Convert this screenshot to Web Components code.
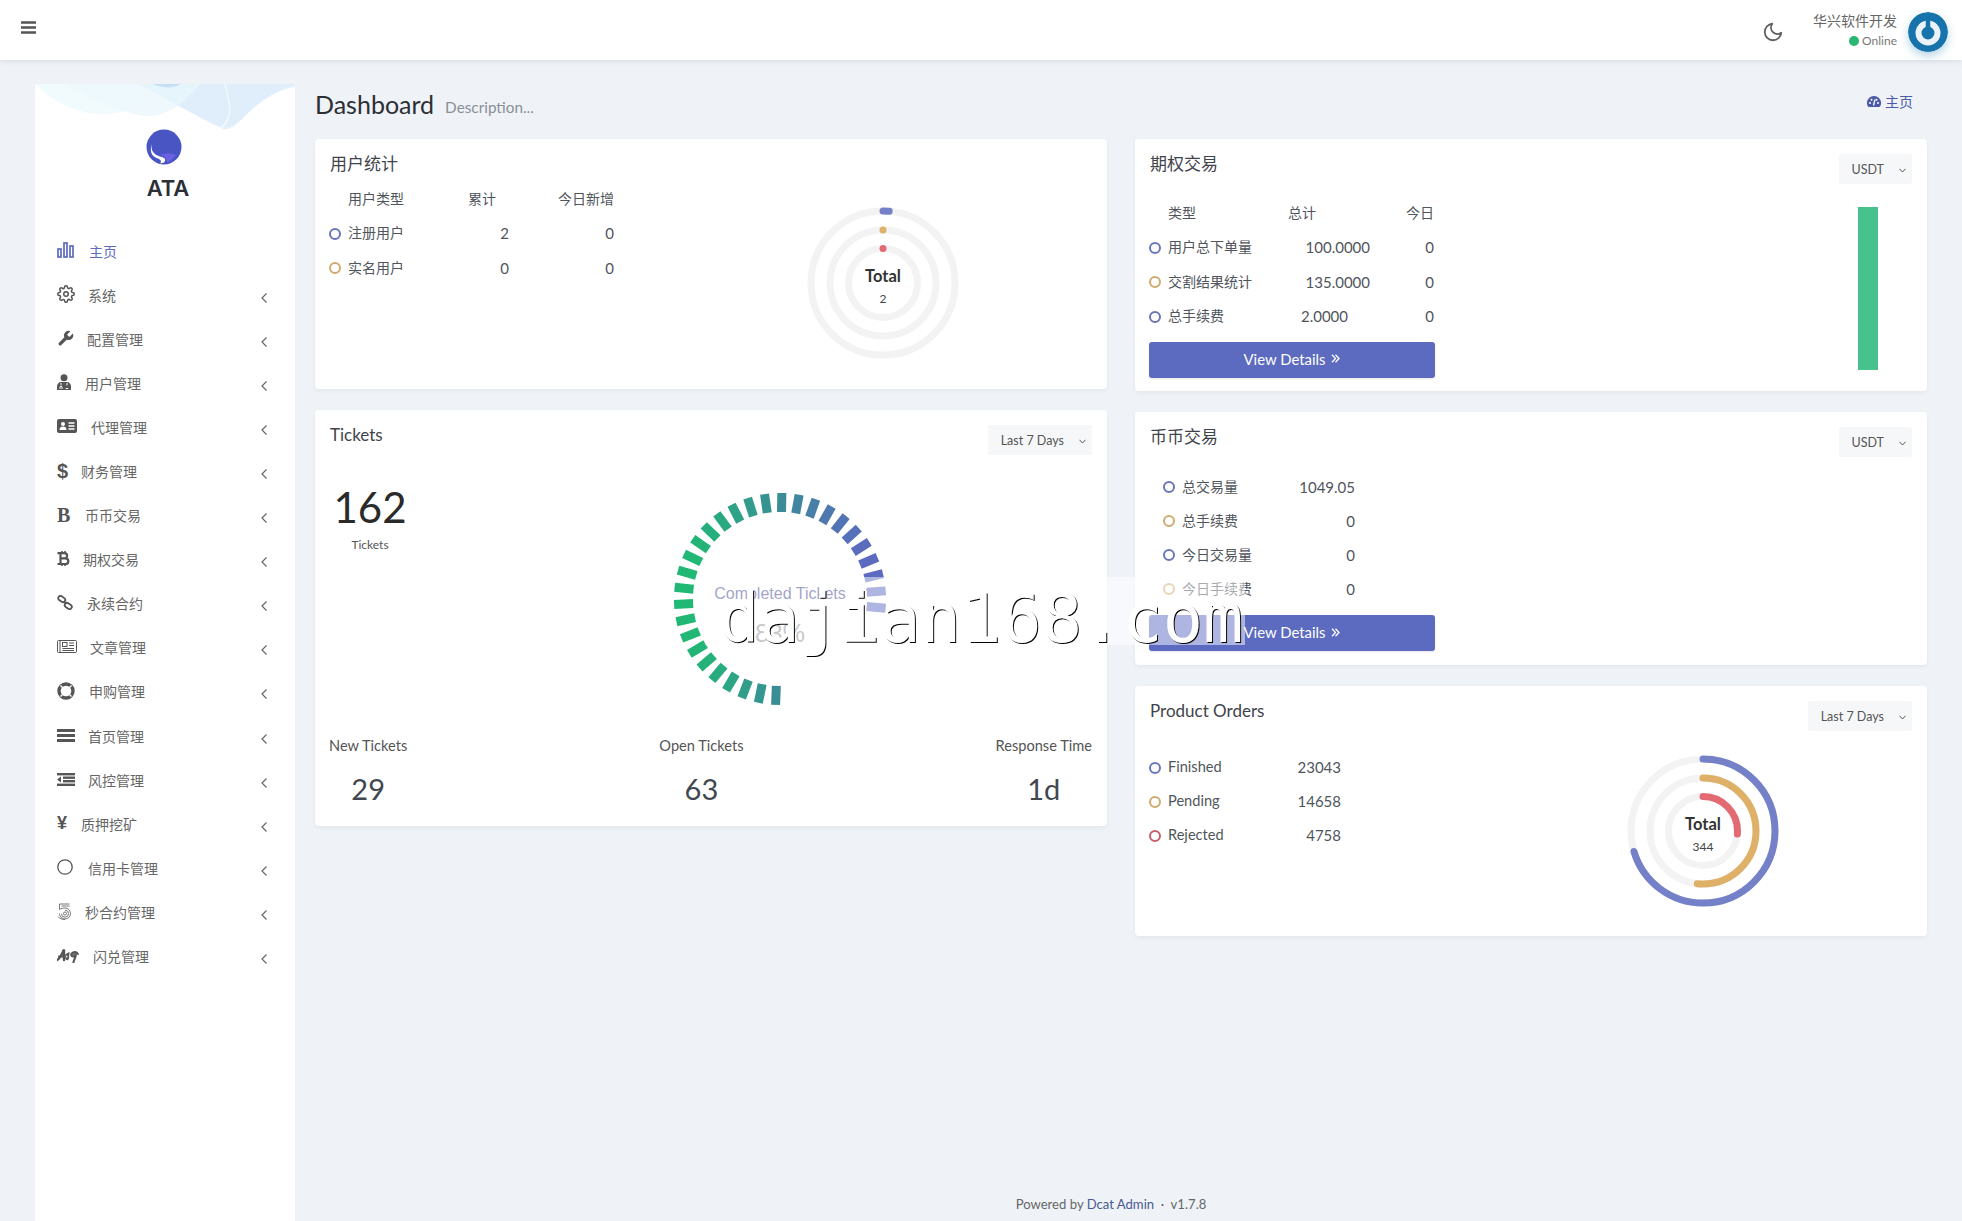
<!DOCTYPE html>
<html lang="zh"><head><meta charset="utf-8"><title>Dashboard</title>
<style>
html,body{margin:0;padding:0;height:1221px;overflow:hidden;background:#eff3f8;color:#414750;
font:14px/20px Lato,"Noto Sans CJK SC","Noto Sans",sans-serif;}
</style></head><body>
<app-shell>
  <app-navbar></app-navbar>
  <app-sidebar slot="side"></app-sidebar>
  <page-head slot="head"></page-head>
  <div slot="left">
    <dash-card style="--h:250px">
      <div style="display:grid;grid-template-columns:345px 1fr">
        <div style="--cols:180px 105px;--rh:34.5px">
          <card-title>用户统计</card-title>
          <div style="height:7.25px"></div>
          <data-row head a="用户类型" b="累计" c="今日新增" pad="13"></data-row>
          <data-row color="#6a76b8" a="注册用户" b="2" c="0"></data-row>
          <data-row color="#d0aa6e" a="实名用户" b="0" c="0"></data-row>
        </div>
        <div style="display:flex;justify-content:center;padding-top:49px">
          <ring-chart label="Total" value="2" v1="5" v2="0.01" v3="0.01"></ring-chart>
        </div>
      </div>
    </dash-card>
    <dash-card style="--h:416px">
      <card-head><card-title>Tickets</card-title><select-btn>Last 7 Days</select-btn></card-head>
      <div style="display:flex">
        <div style="width:82px;text-align:center;padding-top:27px">
          <div style="font-size:42px;line-height:50px;color:#2a2a2a">162</div>
          <div style="font-size:12px;line-height:18px;margin-top:4px;color:#555">Tickets</div>
        </div>
        <ticket-chart style="margin:34px 0 0 259px"></ticket-chart>
      </div>
      <div style="display:flex;justify-content:space-between;margin-top:28px">
        <stat-col label="New Tickets" value="29"></stat-col>
        <stat-col label="Open Tickets" value="63"></stat-col>
        <stat-col label="Response Time" value="1d"></stat-col>
      </div>
    </dash-card>
  </div>
  <div slot="right">
    <dash-card style="--h:252px">
      <card-head><card-title>期权交易</card-title><select-btn>USDT</select-btn></card-head>
      <div style="display:grid;grid-template-columns:286px 1fr;--cols:221px 64px;--rh:34.5px;padding-top:11.25px">
        <div>
          <data-row head a="类型" b="总计" c="今日" pad="54"></data-row>
          <data-row color="#6a76b8" a="用户总下单量" b="100.0000" c="0"></data-row>
          <data-row color="#d0aa6e" a="交割结果统计" b="135.0000" c="0"></data-row>
          <data-row color="#6a76b8" a="总手续费" b="2.0000" c="0" pad="22"></data-row>
          <view-btn style="margin-top:8.25px"></view-btn>
        </div>
        <div style="display:flex;justify-content:flex-end;padding:11.75px 34px 0 0">
          <div style="width:20px;height:163px;background:#47c28c"></div>
        </div>
      </div>
    </dash-card>
    <dash-card style="--h:253px">
      <card-head><card-title>币币交易</card-title><select-btn>USDT</select-btn></card-head>
      <div style="--cols:192px;--rh:34px;padding:12.5px 0 0 14px">
        <data-row color="#6a76b8" a="总交易量" b="1049.05"></data-row>
        <data-row color="#d0aa6e" a="总手续费" b="0"></data-row>
        <data-row color="#6a76b8" a="今日交易量" b="0"></data-row>
        <data-row color="#d0aa6e" a="今日手续费" b="0"></data-row>
      </div>
      <view-btn style="margin-top:9.5px;width:286px"></view-btn>
    </dash-card>
    <dash-card style="--h:250px">
      <card-head><card-title>Product Orders</card-title><select-btn>Last 7 Days</select-btn></card-head>
      <div style="display:flex;--cols:192px;--rh:34px;--lf:14.6px;padding-top:19px">
        <div style="width:192px">
          <data-row color="#6a76b8" a="Finished" b="23043"></data-row>
          <data-row color="#d0aa6e" a="Pending" b="14658"></data-row>
          <data-row color="#c4606c" a="Rejected" b="4758"></data-row>
        </div>
        <ring-chart style="margin:1px 0 0 282px" label="Total" value="344" v1="253" v2="186" v3="95"></ring-chart>
      </div>
    </dash-card>
  </div>
  <page-foot slot="foot"></page-foot>
  <water-mark slot="over">dajian168.com</water-mark>
</app-shell>
<script>
const def=(n,html)=>customElements.define(n,class extends HTMLElement{constructor(){super();this.attachShadow({mode:'open'}).innerHTML=html}});
const esc=s=>String(s==null?'':s);

def('app-shell',`<style>
:host{display:block;position:relative;width:1962px;height:1221px;overflow:hidden}
.main{display:flex;height:1161px}
.side{width:260px;margin:24px 0 0 35px;flex:none}
.content{flex:1;margin:0 35px 0 20px;display:flex;flex-direction:column;min-width:0}
.cols{display:grid;grid-template-columns:792px 792px;gap:28px}
::slotted([slot=left]),::slotted([slot=right]){display:flex;flex-direction:column;gap:21px}
</style>
<slot></slot>
<div class="main">
<div class="side"><slot name="side"></slot></div>
<div class="content">
<slot name="head"></slot>
<div class="cols"><slot name="left"></slot><slot name="right"></slot></div>
<div style="margin-top:auto"><slot name="foot"></slot></div>
</div></div>
<slot name="over"></slot>`);

def('app-navbar',`<style>
:host{display:flex;align-items:center;height:60px;background:#fff;box-shadow:0 1px 6px rgba(0,0,0,.1);position:relative;z-index:1}
.bars{margin:-6px 0 0 21px;display:block}
.sp{flex:1}
.moon{margin-right:29px;display:block;margin-top:3px}
.who{text-align:right;margin-right:11px;color:#666}
.n{font-size:14px;line-height:20px;margin-top:1px}
.o{font-size:12px;line-height:18px;display:flex;justify-content:flex-end;align-items:center;gap:3px;color:#777;margin-top:1px}
.o i{width:10px;height:10px;border-radius:50%;background:#2bb673;display:block}
.av{display:block;margin-right:14px;margin-top:4px;border-radius:50%;box-shadow:0 4px 8px rgba(22,115,171,.3)}
</style>
<svg class="bars" width="15" height="13" viewBox="0 0 15 13"><path d="M0 1.5h15M0 6.5h15M0 11.5h15" stroke="#555" stroke-width="2.4"/></svg>
<div class="sp"></div>
<svg class="moon" width="22" height="22" viewBox="0 0 24 24" fill="none" stroke="#606060" stroke-width="2" stroke-linecap="round" stroke-linejoin="round"><path d="M21 12.79A9 9 0 1 1 11.21 3 7 7 0 0 0 21 12.79z"/></svg>
<div class="who"><div class="n">华兴软件开发</div><div class="o"><i></i>Online</div></div>
<svg class="av" width="40" height="40" viewBox="0 0 40 40"><circle cx="20" cy="20" r="20" fill="#1673ab"/><circle cx="20" cy="21" r="9.5" fill="none" stroke="#e9f3f9" stroke-width="6"/><path d="M20 7v13" stroke="#1673ab" stroke-width="4.5" stroke-linecap="round"/></svg>`);

const ICONS={
 chart:`<svg width="17" height="16" viewBox="0 0 17 16" fill="none" stroke="#5c6bc0" stroke-width="1.7"><rect x="1" y="7" width="3" height="8"/><rect x="7" y="1" width="3" height="14"/><rect x="13" y="4" width="3" height="11"/></svg>`,
 gear:`<svg width="18" height="18" viewBox="0 0 24 24" fill="none" stroke="#555" stroke-width="2" stroke-linecap="round" stroke-linejoin="round"><circle cx="12" cy="12" r="3"/><path d="M19.4 15a1.65 1.65 0 0 0 .33 1.82l.06.06a2 2 0 0 1 0 2.83 2 2 0 0 1-2.83 0l-.06-.06a1.65 1.65 0 0 0-1.82-.33 1.65 1.65 0 0 0-1 1.51V21a2 2 0 0 1-2 2 2 2 0 0 1-2-2v-.09A1.65 1.65 0 0 0 9 19.4a1.65 1.65 0 0 0-1.82.33l-.06.06a2 2 0 0 1-2.83 0 2 2 0 0 1 0-2.83l.06-.06a1.65 1.65 0 0 0 .33-1.82 1.65 1.65 0 0 0-1.51-1H3a2 2 0 0 1-2-2 2 2 0 0 1 2-2h.09A1.65 1.65 0 0 0 4.6 9a1.65 1.65 0 0 0-.33-1.82l-.06-.06a2 2 0 0 1 0-2.83 2 2 0 0 1 2.83 0l.06.06a1.65 1.65 0 0 0 1.82.33H9a1.65 1.65 0 0 0 1-1.51V3a2 2 0 0 1 2-2 2 2 0 0 1 2 2v.09a1.65 1.65 0 0 0 1 1.51 1.65 1.65 0 0 0 1.82-.33l.06-.06a2 2 0 0 1 2.83 0 2 2 0 0 1 0 2.83l-.06.06a1.65 1.65 0 0 0-.33 1.82V9a1.65 1.65 0 0 0 1.51 1H21a2 2 0 0 1 2 2 2 2 0 0 1-2 2h-.09a1.65 1.65 0 0 0-1.51 1z"/></svg>`,
 wrench:`<svg width="17" height="17" viewBox="1 1 22 22" fill="#555"><path d="M14.7 6.3a1 1 0 0 0 0 1.4l1.6 1.6a1 1 0 0 0 1.4 0l3.77-3.77a6 6 0 0 1-7.94 7.94l-6.91 6.91a2.12 2.12 0 0 1-3-3l6.91-6.91a6 6 0 0 1 7.94-7.94l-3.76 3.76z"/></svg>`,
 user:`<svg width="14" height="16" viewBox="0 0 14 16"><circle cx="7" cy="3.7" r="3.5" fill="#555"/><path d="M0 16v-3.5C0 9.8 2 8 4 8h6c2 0 4 1.8 4 4.5V16z" fill="#555"/><path d="M4 9v2M10 9v2.5M3 15v-2l1-1.2 1 1.2v2M8.7 14.5h2.6" stroke="#fff" stroke-width="1" fill="none"/></svg>`,
 card:`<svg width="20" height="14" viewBox="0 0 20 14"><rect width="20" height="14" rx="2" fill="#555"/><circle cx="6" cy="5" r="2" fill="#fff"/><path d="M2.5 11c0-2.5 1.5-3.5 3.5-3.5S9.5 8.5 9.5 11z" fill="#fff"/><path d="M11.5 4h6M11.5 7h6M11.5 10h6" stroke="#fff" stroke-width="1.4"/></svg>`,
 dollar:`<span style="font:700 20px/18px 'Liberation Sans',sans-serif;color:#555;display:block">$</span>`,
 bold:`<span style="font:700 20px/18px 'Liberation Serif',serif;color:#555;display:block">B</span>`,
 btc:`<svg width="13" height="15" viewBox="0 0 13 15" fill="none" stroke="#555"><path d="M.5 2.2h7a2.6 2.6 0 0 1 0 5.2H3.5M3.5 7.4h5a2.8 2.8 0 0 1 0 5.600H.5M3.5 2v11" stroke-width="2.2"/><path d="M5 0v2.500M8 0v2.500M5 12.500v2.500M8 12.500v2.500" stroke-width="1.6"/></svg>`,
 link:`<svg width="16" height="15" viewBox="0 0 16 15" fill="none" stroke="#555" stroke-width="1.8"><rect x="1" y="1.800" width="7.5" height="4.500" rx="2.200" transform="rotate(35 4.700 4)"/><rect x="7.5" y="8.700" width="7.5" height="4.500" rx="2.200" transform="rotate(35 11.200 11)"/><path d="M6.5 6.500l3 2"/></svg>`,
 news:`<svg width="20" height="13" viewBox="0 0 20 13" fill="none" stroke="#555"><rect x=".5" y=".5" width="19" height="12" rx="1"/><path d="M3 .5v12"/><rect x="5.5" y="2.500" width="4.500" height="4" fill="#fff"/><path d="M12 3h5M12 5.500h5M5.500 8.500h11.500M5.500 10.500h11.500" stroke-width="1.2"/></svg>`,
 ring:`<svg width="18" height="18" viewBox="0 0 18 18"><circle cx="9" cy="9" r="7" fill="none" stroke="#555" stroke-width="3.4"/><path d="M3.500 3.500l3.500 3.500M14.500 3.500l-3.500 3.500M3.500 14.500l3.500-3.500M14.500 14.500l-3.500-3.500" stroke="#fff" stroke-width="1.4"/></svg>`,
 rows:`<svg width="18" height="13" viewBox="0 0 18 13" fill="#555"><rect width="18" height="3"/><rect y="5" width="18" height="3"/><rect y="10" width="18" height="3"/></svg>`,
 outdent:`<svg width="18" height="13" viewBox="0 0 18 13" fill="#555"><rect width="18" height="2.4"/><rect x="6" y="3.500" width="12" height="2.4"/><rect x="6" y="7" width="12" height="2.4"/><rect y="10.600" width="18" height="2.4"/><path d="M4 3.500v6L0 6.500z"/></svg>`,
 yen:`<span style="font:700 18px/18px 'Liberation Sans',sans-serif;color:#555;display:block">¥</span>`,
 circle:`<svg width="16" height="16" viewBox="0 0 16 16" fill="none" stroke="#555" stroke-width="1.3"><circle cx="8" cy="8" r="7.2"/></svg>`,
 five:`<svg width="14" height="17" viewBox="0 0 14 17" fill="none" stroke="#777" stroke-width="1"><path d="M2.500 1h10M2.500 1v5.500C4 5.500 6 5 8 5a5.500 5.500 0 1 1-5.500 5.500"/><path d="M4.500 3h8M8 7.200a3.500 3.500 0 1 1-3.500 3.500"/><circle cx="8" cy="10.500" r="1.500"/><path d="M1 13.500c1.500 2 4 3 7 3"/></svg>`,
 sign:`<svg width="22" height="15" viewBox="0 0 22 15" fill="none" stroke="#555" stroke-linecap="round"><path d="M0 12C3 11 5 6 7 1.500L7 12" stroke-width="2.4"/><path d="M2 8.500h6" stroke-width="2"/><path d="M9 7l2.500-1.500L11 10.500C10.500 12 9.500 11 9 10" stroke-width="1.8"/><path d="M20 5c-2-1.500-5-1-5.500 1.500S17 9 19 7L16.500 14" stroke-width="2.2"/><path d="M14 6h7.500" stroke-width="1.5"/></svg>`
};
customElements.define('nav-item',class extends HTMLElement{constructor(){super();this.attachShadow({mode:'open'});}
 connectedCallback(){const a=this.hasAttribute('active');this.shadowRoot.innerHTML=`<style>
 :host{display:flex;align-items:center;height:44.1px;padding:0 28px 0 22px;color:${a?'#5c6bc0':'#666'}}
 .i{flex:none;width:${this.getAttribute('w')}px;display:flex;align-items:center;margin-top:-3px}
 .t{flex:1;font-size:14px}
 svg{display:block}
 </style><div class="i">${ICONS[this.getAttribute('icon')]}</div><div class="t">${this.getAttribute('label')}</div>${a?'':`<svg width="6" height="10" viewBox="0 0 6 10" fill="none" stroke="#666" stroke-width="1.2" style="margin-top:4px"><path d="M5.5 .5L1 5l4.500 4.500"/></svg>`}`;}});

const NAV=[['chart','主页',32,1],['gear','系统',31],['wrench','配置管理',30],['user','用户管理',28],['card','代理管理',34],['dollar','财务管理',24],['bold','币币交易',28],['btc','期权交易',26],['link','永续合约',30],['news','文章管理',33],['ring','申购管理',32],['rows','首页管理',31],['outdent','风控管理',31],['yen','质押挖矿',24],['circle','信用卡管理',31],['five','秒合约管理',28],['sign','闪兑管理',36]];
def('app-sidebar',`<style>
:host{display:block;background:#fff;height:1137px;box-shadow:0 1px 3px rgba(0,0,0,.03);position:relative;overflow:hidden}
.wave{position:absolute;left:0;top:0;display:block}
.brand{height:145.5px;box-sizing:border-box;display:flex;flex-direction:column;align-items:center;padding-top:45px}
.logo{display:block;margin-left:-2px}
.ata{font:600 22px/24px Inter,"Liberation Sans",sans-serif;color:#2b2f36;margin-top:11px;padding-left:6px;letter-spacing:-.1px}
</style>
<svg class="wave" width="260" height="56" viewBox="0 0 260 56">
<path d="M0 0H260V0C240 6 225 18 208 34 200 43 192 45 180 40 150 28 125 10 100 0H0Z" fill="#e4f2fb" opacity=".5"/>
<path d="M102 0C130 12 160 32 188 45 196 47 204 38 214 28 226 16 244 5 260 3V0H102Z" fill="#cfe6f8" opacity=".55"/>
<path d="M30 0C55 14 80 28 110 32 135 33 150 18 165 0H30Z" fill="#e8f6fc" opacity=".7"/>
<path d="M0 0C14 12 30 26 60 30 85 32 105 22 115 15L90 0H0Z" fill="#eef9fd" opacity=".8"/>
<path d="M118 0C128 4 138 5 146 0Z" fill="#bcdcf5" opacity=".8"/>
<path d="M190 0C194 18 200 32 186 44" stroke="#fff" stroke-width="1.5" fill="none" opacity=".6"/>
</svg>
<div class="brand">
<svg class="logo" width="36" height="36" viewBox="0 0 36 36"><circle cx="18" cy="18" r="17.5" fill="#4a55c4"/>
<path d="M14 26C20 24 26 24 30 26 27 30 24 32 21 33.5 21 30 19 27 14 26Z" fill="#6a62e0"/>
<path d="M6 15C4 22 9 26 14 27.5 18 28.5 21 30 18 33.5L14 34.5C16.5 32 14 30 10.5 29 5 27 3.5 21 6 15Z" fill="#fff"/></svg>
<div class="ata">ATA</div>
</div>
<div>${NAV.map(n=>`<nav-item icon="${n[0]}" label="${n[1]}" w="${n[2]}"${n[3]?' active':''}></nav-item>`).join('')}</div>`);

def('page-head',`<style>
:host{display:flex;box-sizing:border-box;height:79px;padding-top:9px;align-items:center;color:#333}
h1{margin:0;font-weight:400;font-size:25px;line-height:30px;color:#2c2f33}
small{font-size:15.3px;color:#8a8f96;margin-left:11px;padding-top:6px}
.sp{flex:1}
.c{display:flex;align-items:center;gap:4px;color:#4a5aa8;margin:-4px 14px 0 0}
svg{display:block}
</style><h1>Dashboard</h1><small>Description...</small><div class="sp"></div>
<div class="c"><svg width="14" height="12" viewBox="0 0 14 12"><path d="M7 0a7 7 0 0 0-6 10.6c.2.3.5.4.8.4h10.400c.3 0 .6-.1.8-.4A7 7 0 0 0 7 0z" fill="#4a5aa8"/><circle cx="3" cy="7" r="1" fill="#fff"/><circle cx="4.5" cy="3.700" r="1" fill="#fff"/><circle cx="9.5" cy="3.700" r="1" fill="#fff"/><circle cx="11" cy="7" r="1" fill="#fff"/><path d="M6.5 9.5L8 3.5" stroke="#fff" stroke-width="1.3"/></svg>主页</div>`);

def('dash-card',`<style>
:host{display:block;box-sizing:border-box;height:var(--h);background:#fff;border-radius:4px;box-shadow:0 2px 4px rgba(0,0,0,.05);padding:15px 15px 0 14px}
</style><slot></slot>`);
def('card-head',`<style>:host{display:flex;justify-content:space-between;align-items:flex-start}</style><slot></slot>`);
def('card-title',`<style>:host{display:block;font-size:17px;line-height:20px;color:#3f444b;padding-left:1px}</style><slot></slot>`);
def('select-btn',`<style>
:host{display:flex;align-items:center;height:30px;box-sizing:border-box;padding:2px 6px 0 13px;background:#f6f7f9;border-radius:3px;font-size:12.5px;color:#555;gap:15px}
svg{display:block}
</style><slot></slot><svg width="7" height="5" viewBox="0 0 7 5" fill="none" stroke="#555" stroke-width="1"><path d="M.5 .8L3.5 4l3-3.200"/></svg>`);
def('view-btn',`<style>
:host{display:flex;align-items:center;justify-content:center;gap:6px;box-sizing:border-box;height:36px;padding-bottom:2px;background:#5c6bc0;color:#fff;border-radius:3px;font-size:14.9px;box-shadow:0 1px 2px rgba(0,0,0,.1)}
svg{display:block}
</style>View Details<svg width="9" height="9" viewBox="0 0 9 9" fill="none" stroke="#fff" stroke-width="1.3"><path d="M1 .8L4.5 4.5 1 8.2M4.5 .8L8 4.5 4.5 8.2"/></svg>`);

customElements.define('data-row',class extends HTMLElement{constructor(){super();this.attachShadow({mode:'open'})}
 connectedCallback(){const g=n=>esc(this.getAttribute(n));const pad=this.getAttribute('pad')||0;const col=g('color');const head=this.hasAttribute('head');
 this.shadowRoot.innerHTML=`<style>
 :host{display:grid;grid-template-columns:var(--cols);height:var(--rh);align-items:center;font-size:14px;color:#50555c}
 .a{display:flex;align-items:center;gap:7px}
 .r{width:8px;height:8px;border:2px solid ${col||'transparent'};border-radius:50%;flex:none;margin-top:1px}
 .l{flex:1;font-size:var(--lf,14px)}
 .b,.c{text-align:right;font-size:${head?14:15}px}
 .b{padding-right:${pad}px}
 </style><div class="a"><i class="r"></i><span class="l">${g('a')}</span><span class="b">${g('b')}</span></div>${this.hasAttribute('c')?`<div class="c">${g('c')}</div>`:''}`;}});

customElements.define('ring-chart',class extends HTMLElement{constructor(){super();this.attachShadow({mode:'open'})}
 connectedCallback(){const g=n=>this.getAttribute(n);
 const ring=(r,v,c)=>{const L=2*Math.PI*r,d=L*v/360;return `<circle cx="80" cy="80" r="${r}" fill="none" stroke="#f3f3f3" stroke-width="7"/><circle cx="80" cy="80" r="${r}" fill="none" stroke="${c}" stroke-width="7" stroke-linecap="round" stroke-dasharray="${d} ${L}" transform="rotate(-90 80 80)"/>`};
 this.shadowRoot.innerHTML=`<style>:host{display:block;width:160px;height:160px;flex:none}svg{display:block}
 text{font-family:Lato,"Noto Sans",sans-serif;text-anchor:middle}</style>
 <svg width="160" height="160" viewBox="0 0 160 160">${ring(72,+g('v1'),'#7480c8')}${ring(53,+g('v2'),'#deb068')}${ring(34.5,+g('v3'),'#e36a72')}
 <text x="80" y="79" font-size="16.5" font-weight="700" fill="#333">${g('label')}</text><text x="80" y="100" font-size="12" fill="#444">${g('value')}</text></svg>`;}});

customElements.define('ticket-chart',class extends HTMLElement{constructor(){super();this.attachShadow({mode:'open'})}
 connectedCallback(){const C=110;let s='';const mix=(a,b,t)=>a.map((v,i)=>Math.round(v+(b[i]-v)*t));
 const G=[32,184,116],M=[58,140,152],B=[92,107,192];
 for(let k=0;k<30;k++){const th=(182.4+9.4*k)*Math.PI/180;const sn=Math.sin(th),cs=-Math.cos(th);
  const t=sn;const col=t<0?mix(M,G,Math.min(1,-t*1.1)):mix(M,B,Math.min(1,t*1.15));
  s+=`<line x1="${C+87*sn}" y1="${C+87*cs}" x2="${C+106*sn}" y2="${C+106*cs}" stroke="rgb(${col})" stroke-width="9"/>`;}
 this.shadowRoot.innerHTML=`<style>:host{display:block;width:220px;height:220px;flex:none}svg{display:block}</style>
 <svg width="220" height="220" viewBox="0 0 220 220">${s}
 <text x="110" y="110" text-anchor="middle" font-family="'Liberation Sans',sans-serif" font-size="16" fill="#414991">Completed Tickets</text>
 <text x="110" y="153" text-anchor="middle" font-family="'Liberation Sans',sans-serif" font-size="25" fill="#8f9396">83%</text></svg>`;}});

customElements.define('stat-col',class extends HTMLElement{constructor(){super();this.attachShadow({mode:'open'})}
 connectedCallback(){this.shadowRoot.innerHTML=`<style>:host{display:block;text-align:center}
 .l{font-size:14.6px;line-height:20px;color:#555;margin-top:-1px}.v{font-size:29px;line-height:40px;margin-top:13px;color:#414750}</style>
 <div class="l">${this.getAttribute('label')}</div><div class="v">${this.getAttribute('value')}</div>`;}});

def('page-foot',`<style>:host{display:block;text-align:center;font-size:13.1px;line-height:20px;color:#666;padding:0 20px 7px 0}
a{color:#4a5a8f;text-decoration:none}</style>Powered by <a>Dcat Admin</a> &nbsp;·&nbsp; v1.7.8`);

def('water-mark',`<style>
:host{position:absolute;left:705px;top:577px;width:540px;height:68px;background:rgba(255,255,255,.5);z-index:5}
.t{position:absolute;left:14px;top:4px;font:400 67px/76px "DejaVu Sans Mono",monospace;color:#fff;text-shadow:1px 1px 0 #000;white-space:nowrap}
</style><div class="t"><slot></slot></div>`);
</script>
</body></html>
